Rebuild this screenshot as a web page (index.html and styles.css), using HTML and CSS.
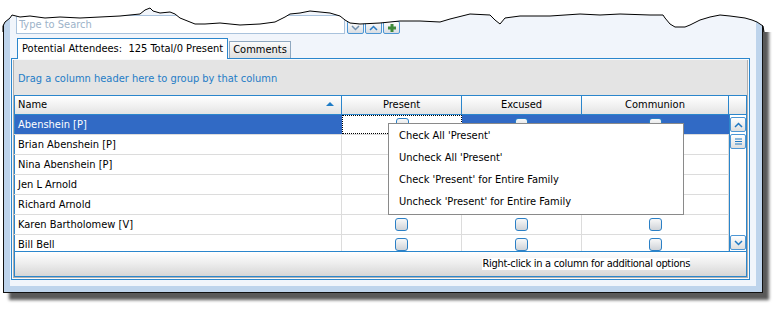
FILE: index.html
```html
<!DOCTYPE html>
<html lang="en">
<head>
  <meta charset="UTF-8" />
  <title>Potential Attendees</title>
  <link rel="stylesheet" href="styles.css">
</head>
<body>

  <div class="stage">

    <div class="window">
      <div class="panel">

        <div class="search-row">
          <div class="search-box">Type to Search</div>
          <span class="tool-btn">
            <svg width="9" height="6" viewBox="0 0 9 6"><path d="M1 1 L4.5 4.5 L8 1" fill="none" stroke="#6f8fae" stroke-width="1.5"/></svg>
          </span>
          <span class="tool-btn">
            <svg width="9" height="6" viewBox="0 0 9 6"><path d="M1 5 L4.5 1.5 L8 5" fill="none" stroke="#2b7cc4" stroke-width="1.5"/></svg>
          </span>
          <span class="tool-btn">
            <svg width="10" height="10" viewBox="0 0 10 10"><path d="M5 1 V9 M1 5 H9" stroke="#3f8a3a" stroke-width="3"/></svg>
          </span>
        </div>

        <div class="tabs">
          <div class="tab active">Potential Attendees:&nbsp; 125 Total/0 Present</div>
          <div class="tab">Comments</div>
        </div>

        <div class="tab-page">
          <div class="grid">
            <div class="group-panel">Drag a column header here to group by that column</div>

            <div class="grid-header">
              <div class="hcell name-col">Name <span class="sort-arrow"></span></div>
              <div class="hcell">Present</div>
              <div class="hcell">Excused</div>
              <div class="hcell">Communion</div>
              <div class="hcell scroll-col"></div>
            </div>

            <div class="grid-body">
              <div class="rows">
                <div class="row selected">
                  <div class="cell name-col">Abenshein [P]</div>
                  <div class="cell focus"><span class="check"></span></div>
                  <div class="cell"><span class="check"></span></div>
                  <div class="cell"><span class="check"></span></div>
                </div>
                <div class="row">
                  <div class="cell name-col">Brian Abenshein [P]</div>
                  <div class="cell"><span class="check"></span></div>
                  <div class="cell"><span class="check"></span></div>
                  <div class="cell"><span class="check"></span></div>
                </div>
                <div class="row">
                  <div class="cell name-col">Nina Abenshein [P]</div>
                  <div class="cell"><span class="check"></span></div>
                  <div class="cell"><span class="check"></span></div>
                  <div class="cell"><span class="check"></span></div>
                </div>
                <div class="row">
                  <div class="cell name-col">Jen L Arnold</div>
                  <div class="cell"><span class="check"></span></div>
                  <div class="cell"><span class="check"></span></div>
                  <div class="cell"><span class="check"></span></div>
                </div>
                <div class="row">
                  <div class="cell name-col">Richard Arnold</div>
                  <div class="cell"><span class="check"></span></div>
                  <div class="cell"><span class="check"></span></div>
                  <div class="cell"><span class="check"></span></div>
                </div>
                <div class="row">
                  <div class="cell name-col">Karen Bartholomew [V]</div>
                  <div class="cell"><span class="check"></span></div>
                  <div class="cell"><span class="check"></span></div>
                  <div class="cell"><span class="check"></span></div>
                </div>
                <div class="row">
                  <div class="cell name-col">Bill Bell</div>
                  <div class="cell"><span class="check"></span></div>
                  <div class="cell"><span class="check"></span></div>
                  <div class="cell"><span class="check"></span></div>
                </div>
              </div>

              <div class="scrollbar">
                <span class="scroll-btn">
                  <svg width="9" height="6" viewBox="0 0 9 6"><path d="M1 5 L4.5 1.5 L8 5" fill="none" stroke="#1f78c2" stroke-width="1.5"/></svg>
                </span>
                <span class="scroll-btn thumb">
                  <svg width="7" height="7" viewBox="0 0 7 7"><path d="M0 1 H7 M0 3.5 H7 M0 6 H7" stroke="#1f78c2" stroke-width="1"/></svg>
                </span>
                <span class="scroll-space"></span>
                <span class="scroll-btn">
                  <svg width="9" height="6" viewBox="0 0 9 6"><path d="M1 1 L4.5 4.5 L8 1" fill="none" stroke="#1f78c2" stroke-width="1.5"/></svg>
                </span>
              </div>
            </div>

            <div class="grid-footer">
              <span class="hint">Right-click in a column for additional options</span>
            </div>
          </div>
        </div>

      </div>
    </div>

    <div class="context-menu">
      <div class="menu-item">Check All 'Present'</div>
      <div class="menu-item">Uncheck All 'Present'</div>
      <div class="menu-item">Check 'Present' for Entire Family</div>
      <div class="menu-item">Uncheck 'Present' for Entire Family</div>
    </div>

    <!-- torn top edge of the screenshot -->
    <svg class="tear" width="777" height="32" viewBox="0 0 777 32">
      <path fill="#fff" d="M0 0 H777 V32 H764 L763 26 L757 22 L752 20 L745 18 L730 16 L720 15 L710 17 L700 20 L690 25 L685 27 L675 27 L670 24 L665 18 L663 15 L650 15 L620 14 L600 15 L580 14 L550 16 L520 16 L505 18 L500 24 L495 20 L490 15 L470 14 L450 19 L440 22 L420 21 L400 21 L380 23 L360 24 L350 23 L345 20 L340 16 L330 13 L320 12 L310 11 L300 13 L290 14 L285 17 L275 22 L260 24 L240 25 L220 23 L205 24 L195 24 L185 20 L180 18 L175 14 L170 12 L160 13 L153 11 L150 8 L145 10 L140 14 L120 16 L100 17 L80 18 L60 17 L45 18 L30 16 L20 17 L12 15 L10 18 L5 22 L3 26 L3 32 H0 Z"/>
      <path fill="none" stroke="#000" stroke-width="1" d="M3 32 L3 26 L5 22 L10 18 L12 15 L20 17 L30 16 L45 18 L60 17 L80 18 L100 17 L120 16 L140 14 L145 10 L150 8 L153 11 L160 13 L170 12 L175 14 L180 18 L185 20 L195 24 L205 24 L220 23 L240 25 L260 24 L275 22 L285 17 L290 14 L300 13 L310 11 L320 12 L330 13 L340 16 L345 20 L350 23 L360 24 L380 23 L400 21 L420 21 L440 22 L450 19 L470 14 L490 15 L495 20 L500 24 L505 18 L520 16 L550 16 L580 14 L600 15 L620 14 L650 15 L663 15 L665 18 L670 24 L675 27 L685 27 L690 25 L700 20 L710 17 L720 15 L730 16 L745 18 L752 20 L757 22 L763 26 L764 32"/>
    </svg>

  </div>

</body>
</html>
```

FILE: styles.css
```css
body {
  margin: 0;
  background-color: #ffffff;
  font-family: 'DejaVu Sans Condensed', 'DejaVu Sans', sans-serif;
  font-size: 11px;
  color: #000;
}

.stage {
  position: relative;
  width: 777px;
  height: 310px;
  overflow: hidden;
}

.window {
  margin: 4px 0 0 3px;
  width: 746px;
  height: 281px;
  border: 1px solid #111;
  background-color: #bed4ec;
  padding: 0 6px 6px 6px;
  display: flex;
  flex-direction: column;
  box-shadow: 6px 7px 3px rgba(0, 0, 0, 0.65);
}

.panel {
  flex: 1;
  background-color: #f1f5fb;
  padding: 10px 6px 6px 1px;
  display: flex;
  flex-direction: column;
}

/* search row */
.search-row {
  display: flex;
  align-items: flex-end;
  gap: 1px;
  margin-left: 5px;
  height: 19px;
  margin-bottom: 4px;
}

.search-box {
  width: 325px;
  height: 17px;
  border: 1px solid #a9c2dc;
  background-color: #fff;
  color: #9db3c9;
  padding-left: 2px;
  line-height: 17px;
  margin-right: 1px;
}

.tool-btn {
  width: 15px;
  height: 11px;
  border: 1px solid #4d96d4;
  border-radius: 2px;
  background: linear-gradient(#fdfdfd, #d9dde2);
  display: flex;
  align-items: center;
  justify-content: center;
}

/* tabs */
.tabs {
  display: flex;
  align-items: flex-end;
  margin-left: 6px;
  height: 21px;
  position: relative;
  z-index: 1;
  margin-bottom: -1px;
}

.tab {
  height: 16px;
  line-height: 16px;
  padding: 0 3px;
  border: 1px solid #8fa8c0;
  border-bottom: none;
  background: linear-gradient(#fbfbfb, #dedede);
  margin-left: 1px;
  margin-bottom: 1px;
}

.tab.active {
  height: 20px;
  line-height: 20px;
  padding: 0 4px;
  margin-left: 0;
  margin-bottom: 0;
  border-color: #2b86cc;
  background: #fff;
}

/* tab page and grid */
.tab-page {
  flex: 1;
  border: 1px solid #2b86cc;
  padding: 1px;
  background-color: #f8fafc;
  display: flex;
}

.grid {
  flex: 1;
  border: 1px solid #b0b0b0;
  border-top: none;
  background-color: #e4e4e4;
  display: flex;
  flex-direction: column;
}

.group-panel {
  height: 35px;
  line-height: 37px;
  padding-left: 4px;
  color: #1f7cc6;
}

.grid-header {
  display: grid;
  grid-template-columns: 328px 120px 120px 147px 18px;
  height: 18px;
  border-top: 1px solid #2b86cc;
  border-bottom: 1px solid #2b86cc;
  background: linear-gradient(#ffffff, #f2f2f2 50%, #e3e3e3);
}

.hcell {
  border-right: 1px solid #2b86cc;
  text-align: center;
  line-height: 17px;
  position: relative;
}

.hcell.name-col {
  text-align: left;
  padding-left: 3px;
  border-left: 1px solid #2b86cc;
}

.sort-arrow {
  position: absolute;
  right: 7px;
  top: 6px;
  width: 0;
  height: 0;
  border-left: 4px solid transparent;
  border-right: 4px solid transparent;
  border-bottom: 4px solid #1f7cc6;
}

.grid-body {
  height: 136px;
  display: flex;
  background-color: #fff;
  overflow: hidden;
}

.rows {
  width: 715px;
}

.row {
  display: grid;
  grid-template-columns: 328px 120px 120px 147px;
  height: 20px;
  box-sizing: border-box;
  border-bottom: 1px solid #dcdcdc;
}

.cell {
  border-right: 1px solid #dcdcdc;
  display: flex;
  justify-content: center;
  align-items: center;
}

.cell.name-col {
  justify-content: flex-start;
  padding-left: 3px;
  border-left: 1px solid #2b86cc;
}

.row.selected {
  background-color: #316ac5;
  color: #fff;
}

.row.selected .cell {
  border-right-color: #316ac5;
}

.row.selected .cell.focus {
  background-color: #fff;
  border: 1px dotted #000;
}

.check {
  width: 11px;
  height: 11px;
  border: 1px solid #2b80c6;
  border-radius: 3px;
  background: linear-gradient(#f8f8f8, #cfd3d8);
}

.scrollbar {
  width: 16px;
  border-left: 1px solid #2b86cc;
  border-right: 1px solid #2b86cc;
  display: flex;
  flex-direction: column;
  align-items: center;
  padding: 2px 0 1px 0;
  gap: 2px;
}

.scroll-btn {
  width: 14px;
  height: 13px;
  border: 1px solid #4d96d4;
  border-radius: 2px;
  background: linear-gradient(#ffffff, #dedede);
  display: flex;
  align-items: center;
  justify-content: center;
}

.scroll-space {
  flex: 1;
}

.grid-footer {
  flex: 1;
  border: 1px solid #2b86cc;
  background: linear-gradient(#ffffff, #ececec 50%, #d6d6d6);
  display: flex;
  align-items: center;
  justify-content: flex-end;
  padding-right: 56px;
}

.hint {
  background-color: #fff;
  line-height: 12px;
  letter-spacing: -0.3px;
}

/* right-click menu */
.context-menu {
  position: absolute;
  left: 388px;
  top: 123px;
  width: 294px;
  border: 1px solid #8a8a8a;
  background-color: #fff;
  padding: 1px 0;
}

.menu-item {
  height: 22px;
  line-height: 22px;
  padding-left: 10px;
}

.tear {
  position: absolute;
  left: 0;
  top: 0;
}
```
